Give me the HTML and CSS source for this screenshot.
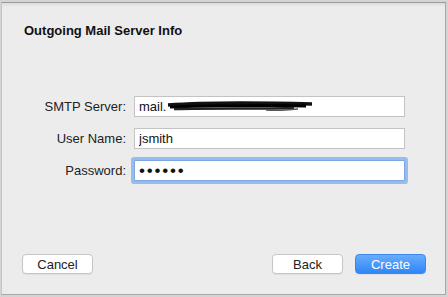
FILE: index.html
```html
<!DOCTYPE html>
<html lang="en">
<head>
    <meta charset="UTF-8">
    <title>Outgoing Mail Server Info</title>
    <link rel="stylesheet" href="styles.css">
</head>
<body>
    <div class="window">
        <h1>Outgoing Mail Server Info</h1>

        <div class="form">
            <div class="row">
                <label for="smtp">SMTP Server:</label>
                <div class="field-wrap">
                    <input type="text" id="smtp" value="mail.">
                    <svg class="scribble" width="150" height="14" viewBox="0 0 150 14">
                        <path d="M2 6 C30 4, 70 3, 146 5" stroke="#111" stroke-width="3.5" fill="none"/>
                        <path d="M4 8 C40 7, 90 6, 140 7" stroke="#000" stroke-width="3" fill="none"/>
                        <path d="M8 10 C50 9, 95 10, 128 9" stroke="#222" stroke-width="2.5" fill="none"/>
                        <path d="M100 11 C112 12, 122 11, 132 10" stroke="#555" stroke-width="1.5" fill="none"/>
                    </svg>
                </div>
            </div>
            <div class="row">
                <label for="user">User Name:</label>
                <div class="field-wrap">
                    <input type="text" id="user" value="jsmith">
                </div>
            </div>
            <div class="row">
                <label for="pass">Password:</label>
                <div class="field-wrap focused">
                    <input type="password" id="pass" value="secret">
                </div>
            </div>
        </div>

        <div class="buttons">
            <button class="btn">Cancel</button>
            <span class="spacer"></span>
            <button class="btn">Back</button>
            <button class="btn primary">Create</button>
        </div>
    </div>
</body>
</html>
```

FILE: styles.css
```css
body {
    margin: 0;
    padding: 2px 1px 0 1px;
    background: #d4d4d4;
    font-family: "Liberation Sans", Arial, sans-serif;
    font-size: 13px;
    color: #222;
}
.window {
    box-sizing: border-box;
    width: 445px;
    height: 293px;
    display: flex;
    flex-direction: column;
    background: linear-gradient(#dcdcdc, #ececec 4px, #ececec);
    border-top: 1px solid #9a9a9a;
    border-left: 1px solid #c4c4c4;
    border-right: 1px solid #a6a6a6;
    border-bottom: 1px solid #a8a8a8;
}
h1 {
    margin: 20px 0 0 22px;
    font-size: 13px;
    line-height: 16px;
    font-weight: bold;
    color: #111;
}
.form {
    margin-top: 57px;
    display: flex;
    flex-direction: column;
    gap: 11px;
}
.row {
    display: flex;
    align-items: center;
    gap: 8px;
}
label {
    width: 124px;
    text-align: right;
    color: #222;
}
.field-wrap {
    position: relative;
    width: 271px;
    height: 21px;
}
input {
    box-sizing: border-box;
    width: 100%;
    height: 21px;
    margin: 0;
    padding: 0 4px;
    border: 1px solid #c3c3c3;
    background: #fff;
    font-family: "Liberation Sans", Arial, sans-serif;
    font-size: 13px;
    color: #111;
    outline: none;
}
input[type="password"] {
    font-size: 17px;
    letter-spacing: 1.8px;
    padding-left: 4px;
}
.focused input {
    border-color: #7ea6e0;
    box-shadow: 0 0 0 3px #97bdf0;
    border-radius: 1px;
}
.scribble {
    position: absolute;
    left: 32px;
    top: 3px;
}
.buttons {
    margin-top: auto;
    margin-bottom: 20px;
    display: flex;
    padding: 0 19px 0 20px;
    gap: 12px;
}
.spacer {
    flex: 1;
}
.btn {
    box-sizing: border-box;
    width: 71px;
    height: 20px;
    padding: 0;
    background: #fff;
    border: 1px solid #c6c6c6;
    border-radius: 4px;
    font-family: "Liberation Sans", Arial, sans-serif;
    font-size: 13px;
    color: #222;
    box-shadow: 0 1px 0 rgba(0,0,0,0.05);
}
.primary {
    background: linear-gradient(#66adfb, #2f86f7);
    border-color: #3d88ee;
    color: #fff;
}
```
